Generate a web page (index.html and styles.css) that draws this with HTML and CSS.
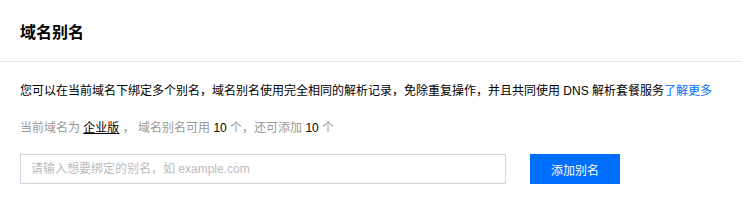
FILE: index.html
```html
<!DOCTYPE html>
<html lang="zh-CN">
  <head>
    <meta charset="UTF-8" />
    <title>域名别名</title>
    <link rel="stylesheet" href="styles.css">
  </head>
  <body>
    <div class="alias-panel">
      <div class="alias-header">
        <h2 class="alias-title">域名别名</h2>
      </div>
      <div class="alias-body">
        <p class="alias-desc">
          您可以在当前域名下绑定多个别名，域名别名使用完全相同的解析记录，免除重复操作，并且共同使用 DNS 解析套餐服务<a href="#" class="alias-link">了解更多</a>
        </p>
        <p class="alias-quota">
          当前域名为 <span class="alias-plan">企业版</span> ， 域名别名可用 <span class="alias-num">10</span> 个，还可添加 <span class="alias-num">10</span> 个
        </p>
        <form class="alias-form">
          <input type="text" class="alias-input" placeholder="请输入想要绑定的别名，如 example.com" />
          <button type="submit" class="alias-button">添加别名</button>
        </form>
      </div>
    </div>
  </body>
</html>
```

FILE: styles.css
```css
body {
  margin: 0;
  background-color: #ffffff;
  font-family: "Liberation Sans", "Noto Sans CJK SC", sans-serif;
  color: #000000;
}

.alias-header {
  padding: 21px 20px 0;
  height: 40px;
  border-bottom: 1px solid #e5e5e5;
}

.alias-title {
  margin: 0;
  font-size: 16px;
  font-weight: bold;
  line-height: 24px;
}

.alias-body {
  padding: 19px 20px 0;
}

.alias-desc {
  margin: 0;
  font-size: 12px;
  line-height: 20px;
  color: #000000;
}

.alias-link {
  color: #006eff;
  text-decoration: none;
}

.alias-quota {
  margin: 17px 0 0;
  font-size: 12px;
  line-height: 20px;
  color: #999999;
}

.alias-plan {
  color: #000000;
  text-decoration: underline;
}

.alias-num {
  color: #000000;
}

.alias-form {
  display: flex;
  margin-top: 16px;
}

.alias-input {
  box-sizing: border-box;
  width: 486px;
  height: 30px;
  padding: 0 10px;
  border: 1px solid #cfd5de;
  border-radius: 0;
  font-family: inherit;
  font-size: 12px;
  outline: none;
}

.alias-input::placeholder {
  color: #bbbbbb;
}

.alias-button {
  width: 90px;
  height: 30px;
  margin-left: 24px;
  border: none;
  background-color: #006eff;
  color: #ffffff;
  font-family: inherit;
  font-size: 12px;
  cursor: pointer;
}
```
